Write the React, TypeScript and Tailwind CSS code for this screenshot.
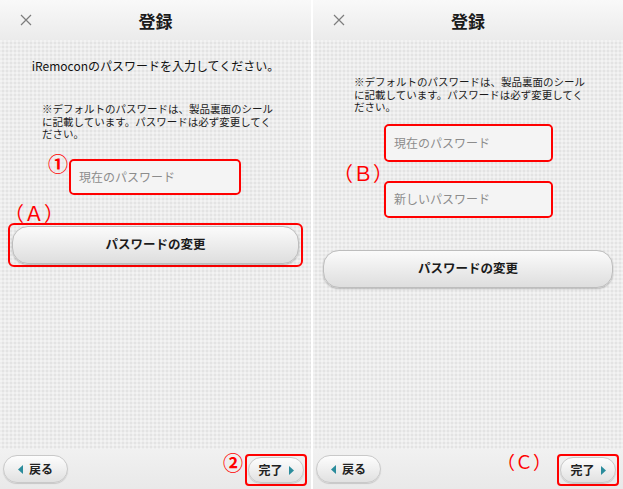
const bodyBg =
  'bg-[#e3e3e3] bg-[image:linear-gradient(90deg,rgba(255,255,255,0.35)_50%,transparent_50%),linear-gradient(rgba(255,255,255,0.35)_50%,transparent_50%)] bg-[length:4px_4px]';

function Header() {
  return (
    <div className="grid h-10 shrink-0 grid-cols-[1fr_auto_1fr] items-center bg-linear-to-b from-[#f9f9f9] to-[#ebebeb] px-5">
      <svg width="12" height="12" viewBox="0 0 12 12">
        <path d="M1 1L11 11M11 1L1 11" stroke="#7d7d7d" strokeWidth="1.2" />
      </svg>
      <span className="text-[17px] font-bold leading-none text-[#1b1b1b]">登録</span>
      <span />
    </div>
  );
}

function Arrow({ left }: { left?: boolean }) {
  return (
    <svg width="5" height="9" viewBox="0 0 5 9">
      <path d={left ? 'M5 0L0 4.5L5 9Z' : 'M0 0L5 4.5L0 9Z'} fill="#2b8c9c" />
    </svg>
  );
}

function BackButton() {
  return (
    <div className="flex h-[28px] w-[65px] items-center justify-center gap-[6px] rounded-full border border-[#c9c9c9] bg-linear-to-b from-[#fdfdfd] to-[#e1e1e1] text-[12px] font-bold text-[#222] shadow-[0_1px_1px_rgba(0,0,0,0.15)]">
      <Arrow left />
      <span>戻る</span>
    </div>
  );
}

function DoneButton() {
  return (
    <div className="rounded-[4px] border-2 border-[#ff0000] p-[1px]">
      <div className="flex h-[26px] w-[56px] items-center justify-center gap-[6px] rounded-full border border-[#c9c9c9] bg-linear-to-b from-[#fdfdfd] to-[#e1e1e1] text-[12px] font-bold text-[#222] shadow-[0_1px_1px_rgba(0,0,0,0.15)]">
        <span>完了</span>
        <Arrow />
      </div>
    </div>
  );
}

function Footer({ mark }: { mark: React.ReactNode }) {
  return (
    <div className="flex h-10 shrink-0 items-start justify-between bg-linear-to-b from-[#f1f1f1] to-[#e9e9e9] pl-[3px] pr-[4px] pt-[5px]">
      <div className="pt-[1px]">
        <BackButton />
      </div>
      <div className="flex items-start">
        {mark}
        <DoneButton />
      </div>
    </div>
  );
}

function Field({ label, w, h }: { label: string; w: string; h: string }) {
  return (
    <div className={`rounded-[5px] border-2 border-[#ff0000] ${w} ${h}`}>
      <div className="flex h-full items-center rounded-[4px] bg-[#f4f4f4] pl-[8px] text-[12px] text-[#8c8c8c]">
        {label}
      </div>
    </div>
  );
}

function ChangeButton() {
  return (
    <div className="flex h-[38px] items-center justify-center rounded-[16px] border border-[#bdbdbd] bg-linear-to-b from-[#fbfbfb] to-[#dedede] text-[12.5px] font-bold text-[#1b1b1b] shadow-[0_1px_2px_rgba(0,0,0,0.25)]">
      パスワードの変更
    </div>
  );
}

function Note({ className }: { className: string }) {
  return (
    <p className={`text-[10.5px] leading-[12.5px] text-[#1b1b1b] ${className}`}>
      ※デフォルトのパスワードは、製品裏面のシールに記載しています。パスワードは必ず変更してください。
    </p>
  );
}

function Mark({ text, className }: { text: string; className: string }) {
  return <span className={`whitespace-nowrap text-[#ff0000] ${className}`}>{text}</span>;
}

function LeftPanel() {
  return (
    <div className="flex h-full w-[311px] shrink-0 flex-col">
      <Header />
      <div className={`flex-1 ${bodyBg}`}>
        <p className="pt-[17px] text-center text-[12px] leading-[18px] text-[#111]">
          iRemoconのパスワードを入力してください。
        </p>
        <Note className="ml-[42px] mt-[28px] w-[232px]" />
        <div className="mt-[18px] flex items-start pl-[48px]">
          <Mark text="①" className="-mt-[7px] w-[21px] text-[20px] font-bold leading-[24px]" />
          <Field label="現在のパスワード" w="w-[172px]" h="h-[36px]" />
        </div>
        <div className="ml-[4px] mt-[8px]">
          <Mark text="（Ａ）" className="block text-[20px] leading-[20px]" />
        </div>
        <div className="mx-[8px] mt-[0px] rounded-[6px] border-2 border-[#ff0000] px-[2px] py-[1px]">
          <ChangeButton />
        </div>
      </div>
      <Footer mark={<Mark text="②" className="mr-[2px] mt-[-3px] text-[20px] font-bold leading-[24px]" />} />
    </div>
  );
}

function RightPanel() {
  return (
    <div className="flex h-full flex-1 flex-col">
      <Header />
      <div className={`flex-1 ${bodyBg}`}>
        <Note className="ml-[41px] mt-[36px] w-[232px]" />
        <div className="mt-[10px] flex items-center pl-[20px]">
          <div className="w-[51px] pt-[5px]">
            <Mark text="（Ｂ）" className="block text-[20px] leading-[20px]" />
          </div>
          <div className="flex flex-col gap-[19px]">
            <Field label="現在のパスワード" w="w-[169px]" h="h-[38px]" />
            <Field label="新しいパスワード" w="w-[169px]" h="h-[37px]" />
          </div>
        </div>
        <div className="mx-[10px] mt-[32px]">
          <ChangeButton />
        </div>
      </div>
      <Footer mark={<Mark text="（Ｃ）" className="mr-[6px] mt-[-2px] block text-[18px] leading-[18px]" />} />
    </div>
  );
}

export default function App() {
  return (
    <div className="flex h-[489px] w-[623px] gap-[2px] overflow-hidden bg-white font-['Noto_Sans_CJK_JP','Noto_Sans',sans-serif]">
      <LeftPanel />
      <RightPanel />
    </div>
  );
}
